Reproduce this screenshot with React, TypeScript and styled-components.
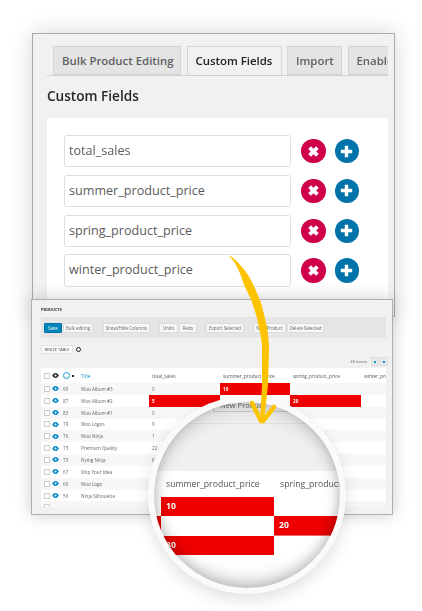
import React from "react";
import styled, { createGlobalStyle } from "styled-components";

const Global = createGlobalStyle`
  html, body { margin: 0; padding: 0; background: #fff; }
  body { font-family: "Open Sans", "Noto Sans", sans-serif; }
  * { box-sizing: border-box; }
`;

const Stage = styled.div`
  position: relative;
  width: 422px;
  height: 611px;
  overflow: hidden;
  background: #fff;
  padding: 33px 0 0 32px;
  display: flex;
  flex-direction: column;
  align-items: flex-start;
`;

const FieldsPanel = styled.section`
  width: 363px;
  height: 284px;
  flex: none;
  background: #f1f1f1;
  border: 1px solid #a9a9a9;
  box-shadow: 0 0 22px rgba(0, 0, 0, 0.16);
  padding: 12px 6px 0 14px;
  display: flex;
  flex-direction: column;
  filter: blur(0.2px);
`;

const TabBar = styled.div`
  height: 30px;
  flex: none;
  display: flex;
  align-items: flex-end;
  gap: 5.5px;
  padding-left: 6px;
  border-bottom: 1px solid #cfcfcf;
  overflow: hidden;
`;

const Tab = styled.div<{ $active?: boolean; $w: number }>`
  width: ${(p) => p.$w}px;
  flex: none;
  height: ${(p) => (p.$active ? 30 : 29)}px;
  margin-bottom: ${(p) => (p.$active ? -1 : 0)}px;
  border: 1px solid #d4d4d4;
  border-width: 1px 1px ${(p) => (p.$active ? 0 : 1)}px 1px;
  background: ${(p) => (p.$active ? "#f1f1f1" : "#e4e4e4")};
  color: ${(p) => (p.$active ? "#222" : "#606060")};
  font-size: 11.4px;
  font-weight: 600;
  line-height: 27px;
  padding-left: 8px;
  white-space: nowrap;
  overflow: hidden;
`;

const PanelTitle = styled.h2`
  margin: 10px 0 0;
  font-size: 13.6px;
  line-height: 20px;
  font-weight: 600;
  color: #23282d;
`;

const FieldBox = styled.div`
  margin-top: 12px;
  flex: 1;
  background: #fff;
  padding: 17px 0 0 17px;
  display: flex;
  flex-direction: column;
  gap: 7.4px;
`;

const FieldRow = styled.div`
  display: flex;
  align-items: center;
`;

const FieldInput = styled.div`
  width: 227px;
  height: 32.4px;
  border: 1px solid #dedede;
  border-radius: 3px;
  background: #fff;
  color: #5c5c5c;
  font-size: 12.6px;
  line-height: 30px;
  padding-left: 4px;
`;

const RoundButton = styled.div<{ $color: string }>`
  width: 24.5px;
  height: 24.5px;
  border-radius: 50%;
  background: ${(p) => p.$color};
  margin-left: 10px;
  flex: none;
  display: flex;
  align-items: center;
  justify-content: center;
  & + & { margin-left: 9px; }
`;

const ProductsPanel = styled.section`
  position: relative;
  margin: -18px 0 0 -1px;
  width: 362px;
  height: 216px;
  flex: none;
  background: #f1f1f1;
  border: 1px solid #b0b0b0;
  box-shadow: 0 0 16px rgba(0, 0, 0, 0.2);
  padding: 6px 6px 7px 9px;
  display: flex;
  flex-direction: column;
  overflow: hidden;
  filter: blur(0.3px);
`;

const SmallTitle = styled.div`
  font-size: 3.9px;
  line-height: 7px;
  font-weight: 700;
  color: #333;
  text-transform: uppercase;
`;

const Toolbar = styled.div`
  margin-top: 4px;
  height: 21px;
  flex: none;
  background: #e5e5e5;
  display: flex;
  align-items: center;
  padding-left: 3px;
  gap: 1px;
`;

const ToolButton = styled.div<{ $primary?: boolean; $w: number; $gap?: number }>`
  width: ${(p) => p.$w}px;
  margin-left: ${(p) => p.$gap ?? 0}px;
  height: 10px;
  flex: none;
  border-radius: 1px;
  background: ${(p) => (p.$primary ? "#0085ba" : "#f7f7f7")};
  border: 1px solid ${(p) => (p.$primary ? "#0073aa" : "#dcdcdc")};
  color: ${(p) => (p.$primary ? "#fff" : "#666")};
  font-size: 4.4px;
  line-height: 8px;
  text-align: center;
  white-space: nowrap;
  overflow: hidden;
`;

const ResizeRow = styled.div`
  margin-top: 7px;
  display: flex;
  align-items: center;
  gap: 3px;
  height: 9px;
`;

const ResizeButton = styled.div`
  width: 32px;
  height: 9px;
  background: #fafafa;
  border: 1px solid #e2e2e2;
  border-radius: 1px;
  font-size: 4px;
  line-height: 7px;
  color: #444;
  text-align: center;
  white-space: nowrap;
`;

const Gear = styled.div`
  width: 5px;
  height: 5px;
  border-radius: 50%;
  border: 1.5px solid #222;
`;

const Pager = styled.div`
  margin: 3px 0 2px;
  height: 9px;
  width: 347px;
  flex: none;
  display: flex;
  justify-content: flex-end;
  align-items: center;
  gap: 1px;
  font-size: 4.2px;
  color: #666;
`;

const PageDot = styled.div<{ $on?: boolean }>`
  width: 8px;
  height: 9px;
  margin-left: ${(p) => (p.$on ? 3 : 0)}px;
  background: #e8e8e8;
  border: 1px solid #ddd;
  display: flex;
  align-items: center;
  justify-content: center;
  &::after {
    content: "";
    width: 2px;
    height: 2px;
    background: #0a9bd0;
  }
`;

const Table = styled.div`
  flex: 1;
  width: 345px;
  background: #fff;
  overflow: hidden;
`;

const gridCols = "11px 11px 18px 68px 71px 70px 71px 80px";

const HeadRow = styled.div`
  height: 15px;
  display: grid;
  grid-template-columns: ${gridCols};
  align-items: center;
  font-size: 4.8px;
  color: #555;
`;

const BodyRow = styled.div<{ $odd: boolean }>`
  height: 11.85px;
  display: grid;
  grid-template-columns: ${gridCols};
  align-items: center;
  font-size: 4.6px;
  color: #666;
  background: ${(p) => (p.$odd ? "#f7f7f7" : "#fff")};
`;

const Check = styled.div`
  width: 6px;
  height: 6px;
  margin-left: 3px;
  border: 1px solid #ccc;
  background: #fff;
`;

const TitleLink = styled.span`
  color: #0a9bd0;
`;

const SortMark = styled.div`
  display: flex;
  align-items: center;
  gap: 2px;
  &::before {
    content: "";
    width: 5px;
    height: 5px;
    border-radius: 50%;
    border: 1px solid #0a9bd0;
  }
  &::after {
    content: "";
    width: 2px;
    height: 2px;
    background: #222;
  }
`;

const Cell = styled.div<{ $red?: boolean }>`
  height: 100%;
  display: flex;
  align-items: center;
  padding-left: 3px;
  white-space: nowrap;
  background: ${(p) => (p.$red ? "#ee0000" : "transparent")};
  color: ${(p) => (p.$red ? "#fff" : "inherit")};
  font-weight: ${(p) => (p.$red ? 700 : 400)};
`;

const Lens = styled.div`
  position: absolute;
  left: 148px;
  top: 396px;
  width: 198px;
  height: 198px;
  border-radius: 50%;
  border: 6px solid rgba(250, 250, 250, 0.96);
  box-shadow: 0 6px 16px rgba(0, 0, 0, 0.12);
  overflow: hidden;
  background: #f1f1f1;
  display: flex;
  flex-direction: column;
`;

const LensInner = styled.div`
  position: absolute;
  inset: 0;
  border-radius: 50%;
  box-shadow: inset 0 -6px 14px rgba(0, 0, 0, 0.2), inset 0 10px 16px rgba(0, 0, 0, 0.1), inset 0 0 10px rgba(0, 0, 0, 0.08);
  pointer-events: none;
`;

const LensToolbar = styled.div`
  height: 22px;
  flex: none;
  padding-left: 59px;
  border-bottom: 1px solid #e2e2e2;
`;

const NewProduct = styled.div`
  width: 77px;
  height: 10px;
  background: #f0f0f0;
  border: 1px solid #ccc;
  border-top: 0;
  border-radius: 0 0 2px 2px;
  font-size: 7.5px;
  line-height: 7px;
  color: #666;
  padding-left: 6px;
  white-space: nowrap;
`;

const LensGap = styled.div`
  height: 47px;
  flex: none;
  background: #f0f0f0;
`;

const LensHead = styled.div`
  height: 26px;
  flex: none;
  background: #fff;
  display: grid;
  grid-template-columns: 114px 113px;
  align-items: center;
  padding-left: 12px;
  font-size: 8.7px;
  color: #555;
  white-space: nowrap;
`;

const LensRow = styled.div`
  height: 19.3px;
  flex: none;
  display: grid;
  grid-template-columns: 7px 113px 113px;
  background: #fff;
`;

const LensCell = styled.div<{ $red?: boolean }>`
  background: ${(p) => (p.$red ? "#ee0000" : "transparent")};
  color: #fff;
  font-size: 8.6px;
  font-weight: 700;
  line-height: 19px;
  padding-left: 5px;
  border-bottom: 1px solid ${(p) => (p.$red ? "#f36b6b" : "transparent")};
`;

const LensFooter = styled.div`
  flex: 1;
  background: linear-gradient(#fff 0, #f7f7f7 100%);
`;

const ArrowLayer = styled.svg`
  position: absolute;
  left: 0;
  top: 0;
  pointer-events: none;
`;

const fields = ["total_sales", "summer_product_price", "spring_product_price", "winter_product_price"];

const rows: [string, string, string][] = [
  ["90", "Woo Album #3", "0"],
  ["87", "Woo Album #2", "5"],
  ["83", "Woo Album #1", "0"],
  ["79", "Woo Logos", "9"],
  ["76", "Woo Ninja", "1"],
  ["73", "Premium Quality", "22"],
  ["70", "Flying Ninja", "8"],
  ["67", "Ship Your Idea", "6"],
  ["60", "Woo Logo", "0"],
  ["56", "Ninja Silhouette", ""],
  ["", "", ""],
];

const Eye = ({ color }: { color: string }) => (
  <svg width="7" height="5" viewBox="0 0 14 10">
    <path d="M0 5C3 1 5 0 7 0s4 1 7 5c-3 4-5 5-7 5S3 9 0 5z" fill={color} />
    <circle cx="7" cy="5" r="2" fill="#fff" />
  </svg>
);

const Cross = () => (
  <svg width="15" height="15" viewBox="0 0 15 15">
    <path d="M3.6 3.6l7.8 7.8M11.4 3.6l-7.8 7.8" stroke="#fff" strokeWidth="3.8" />
  </svg>
);

const Plus = () => (
  <svg width="15" height="15" viewBox="0 0 15 15">
    <path d="M7.5 1.8v11.4M1.8 7.5h11.4" stroke="#fff" strokeWidth="3.4" />
  </svg>
);

export default function App() {
  return (
    <Stage>
      <Global />
      <FieldsPanel>
        <TabBar>
          <Tab $w={128}>Bulk Product Editing</Tab>
          <Tab $w={95} $active>Custom Fields</Tab>
          <Tab $w={55}>Import</Tab>
          <Tab $w={60}>Enable</Tab>
        </TabBar>
        <PanelTitle>Custom Fields</PanelTitle>
        <FieldBox>
          {fields.map((f) => (
            <FieldRow key={f}>
              <FieldInput>{f}</FieldInput>
              <RoundButton $color="#d0004b"><Cross /></RoundButton>
              <RoundButton $color="#0073aa"><Plus /></RoundButton>
            </FieldRow>
          ))}
        </FieldBox>
      </FieldsPanel>

      <ProductsPanel>
        <SmallTitle>Products</SmallTitle>
        <Toolbar>
          <ToolButton $primary $w={18}>Save</ToolButton>
          <ToolButton $w={30}>Bulk editing</ToolButton>
          <ToolButton $w={47} $gap={9}>Show/Hide Columns</ToolButton>
          <ToolButton $w={19} $gap={8}>Undo</ToolButton>
          <ToolButton $w={18}>Redo</ToolButton>
          <ToolButton $w={38} $gap={8}>Export Selected</ToolButton>
          <ToolButton $w={33} $gap={8}>New Product</ToolButton>
          <ToolButton $w={37}>Delete Selected</ToolButton>
        </Toolbar>
        <ResizeRow>
          <ResizeButton>RESIZE TABLE</ResizeButton>
          <Gear />
        </ResizeRow>
        <Pager>
          40 items
          <PageDot $on />
          <PageDot />
        </Pager>
        <Table>
          <HeadRow>
            <Check />
            <Eye color="#333" />
            <SortMark />
            <TitleLink>Title</TitleLink>
            <Cell>total_sales</Cell>
            <Cell>summer_product_price</Cell>
            <Cell>spring_product_price</Cell>
            <Cell>winter_product_price</Cell>
          </HeadRow>
          {rows.map(([id, title, sales], i) => (
            <BodyRow key={i} $odd={i % 2 === 0}>
              <Check />
              {id ? <Eye color="#0a8fc4" /> : <span />}
              <span>{id}</span>
              <span>{title}</span>
              <Cell $red={i === 1}>{sales}</Cell>
              <Cell $red={i === 0}>{i === 0 ? "10" : ""}</Cell>
              <Cell $red={i === 1}>{i === 1 ? "20" : ""}</Cell>
              <span />
            </BodyRow>
          ))}
        </Table>
      </ProductsPanel>

      <Lens>
        <LensToolbar>
          <NewProduct>New Product</NewProduct>
        </LensToolbar>
        <LensGap />
        <LensHead>
          <span>summer_product_price</span>
          <span>spring_product_price</span>
        </LensHead>
        <LensRow>
          <LensCell />
          <LensCell $red>10</LensCell>
          <LensCell />
        </LensRow>
        <LensRow>
          <LensCell $red />
          <LensCell />
          <LensCell $red>20</LensCell>
        </LensRow>
        <LensRow>
          <LensCell />
          <LensCell $red>30</LensCell>
          <LensCell />
        </LensRow>
        <LensFooter />
        <LensInner />
      </Lens>

      <ArrowLayer width="422" height="611" viewBox="0 0 422 611">
        <path d="M228 255C236 262 240 272 244 285C248 293 251 299 253 305C256 314 258 321 259 328C261 336 262 343 262 350L262 385L260 421L264 421L268 385L269 350C269 342 268 335 267 327C265 318 263 310 261 303C258 295 255 288 252 282C248 274 244 269 241 266C237 261 233 257 228 255z" fill="#fdc300" />
        <path d="M252 403L261 421M274 407L263 421" stroke="#fdc300" strokeWidth="4.5" strokeLinecap="round" fill="none" />
      </ArrowLayer>
    </Stage>
  );
}
